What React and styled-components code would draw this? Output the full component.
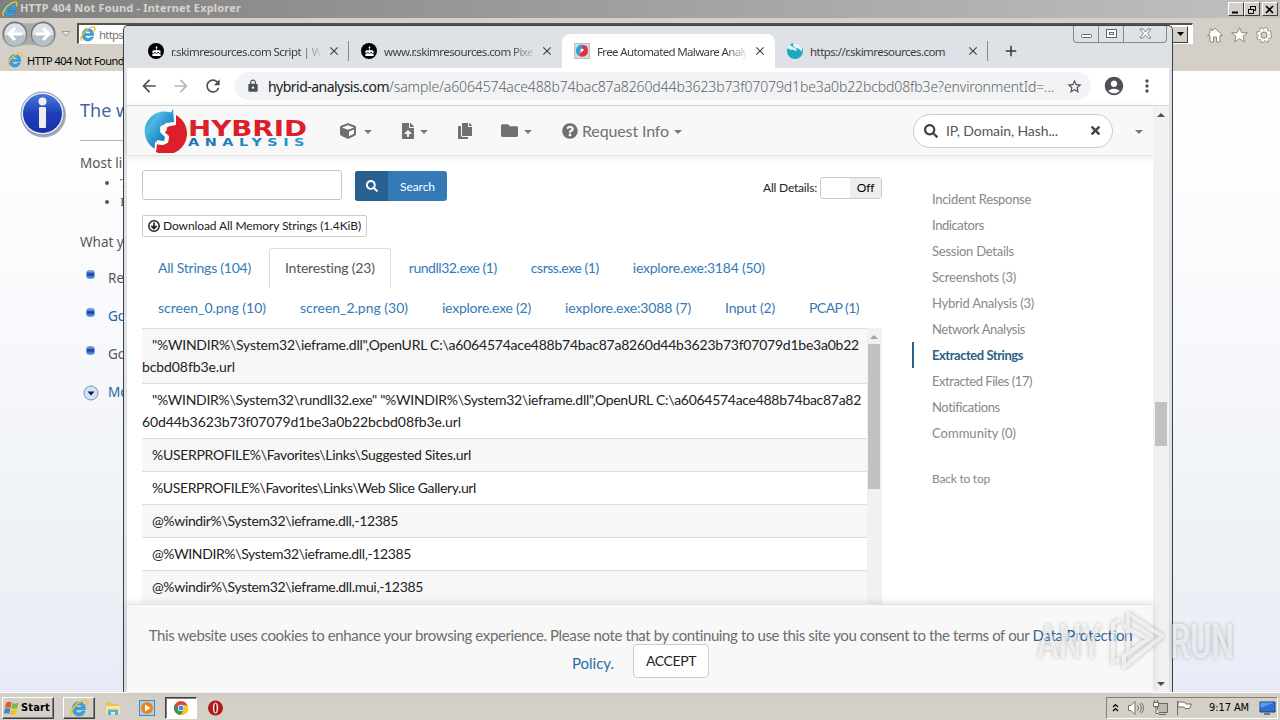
import React, { useLayoutEffect, useRef, useState } from "react";
import styled, { createGlobalStyle, css } from "styled-components";
import {
  FaCube,
  FaFileUpload,
  FaCopy,
  FaFolder,
  FaQuestionCircle,
  FaSearch,
  FaTimes,
} from "react-icons/fa";
import {
  MdArrowBack,
  MdArrowForward,
  MdRefresh,
  MdLock,
  MdStarBorder,
  MdAccountCircle,
  MdMoreVert,
  MdAdd,
  MdClose,
  MdCake,
} from "react-icons/md";

// keeps a label at a fixed width by adjusting its letter spacing
const Fit = ({ w, children }) => {
  const ref = useRef(null);
  const [space, setSpace] = useState(0);

  useLayoutEffect(() => {
    const natural = ref.current.getBoundingClientRect().width;
    setSpace((w - natural) / ref.current.textContent.length);
  }, []);

  return (
    <StFit ref={ref} style={{ letterSpacing: space }}>
      {children}
    </StFit>
  );
};

const IeLogo = ({ size = 16 }) => (
  <svg width={size} height={size} viewBox="0 0 16 16">
    <path
      d="M13.6 9.6H5.1c.2 1.8 1.4 2.8 3 2.8 1.100 0 2-.5 2.500-1.300h2.800C12.600 13.500 10.700 15 8 15c-3.600 0-5.900-2.500-5.900-6.100C2.100 5.300 4.500 2.600 8 2.600c3.500 0 5.900 2.600 5.600 7zM5.200 7.500h5.400C10.400 6 9.400 5.100 7.900 5.100 6.400 5.100 5.500 6 5.200 7.500z"
      fill="#35a5e5"
      stroke="#1c78c0"
      strokeWidth=".5"
    />
    <path
      d="M1.700 14.600C-.6 12.500 3.600 5.500 8.300 2.800 11.500.9 14.800.3 15 2.600c.1.900-.3 1.900-.8 2.900"
      fill="none"
      stroke="#f2c22c"
      strokeWidth="1.500"
    />
  </svg>
);

const HybridLogo = () => (
  <svg width="164" height="44" viewBox="0 0 164 44">
    <defs>
      <linearGradient id="blue" x1="0" y1="0" x2="1" y2="1">
        <stop offset="0" stopColor="#1682be" />
        <stop offset=".3" stopColor="#4db9e4" />
        <stop offset=".7" stopColor="#137fbd" />
      </linearGradient>
      <linearGradient id="word" x1="0" y1="0" x2="1" y2="0">
        <stop offset="0" stopColor="#1d6fae" />
        <stop offset="1" stopColor="#1fa0cf" />
      </linearGradient>
    </defs>
    <path
      d="M29 0l1 13-8 1-5 4-1 5 5 5-1 4-7-1-2 9A20 20 0 0 1 20 2.500q4 0 7 1z"
      fill="url(#blue)"
    />
    <path
      d="M32 6a20 20 0 0 1-20 37v-8l7 1 5-3 1-6-5-4 1-4 5-2 6-1z"
      fill="#dd1f2c"
    />
    <path d="M31 5v10l-7 1-4 4 0 4 4 4-1 5-4 2-7-1-.5 7" fill="none" stroke="#f8f8f8" strokeWidth="2" />
    <circle cx="19.500" cy="19.500" r="3.500" fill="#f8f8f8" />
    <text
      x="44"
      y="27"
      textLength="119"
      lengthAdjust="spacingAndGlyphs"
      fontFamily="DejaVu Sans"
      fontWeight="700"
      fontSize="21.500"
      fill="#dd1f2c"
    >
      HYBRID
    </text>
    <text
      x="44"
      y="37"
      textLength="122"
      lengthAdjust="spacingAndGlyphs"
      letterSpacing="4"
      fontFamily="DejaVu Sans"
      fontWeight="700"
      fontSize="10.500"
      fill="url(#word)"
    >
      ANALYSIS
    </text>
  </svg>
);

const tabs = [
  { title: "r.skimresources.com Script | W", icon: "cake", w: 151 },
  { title: "www.r.skimresources.com Pixe", icon: "cake", w: 149 },
  { title: "Free Automated Malware Analy", icon: "hybrid", w: 151, active: true },
  { title: "https://r.skimresources.com", icon: "skim", w: 135 },
];

const stringTabs = [
  [
    { label: "All Strings (104)", w: 93 },
    { label: "Interesting (23)", w: 90, active: true },
    { label: "rundll32.exe (1)", w: 88 },
    { label: "csrss.exe (1)", w: 68 },
    { label: "iexplore.exe:3184 (50)", w: 132 },
  ],
  [
    { label: "screen_0.png (10)", w: 108 },
    { label: "screen_2.png (30)", w: 108 },
    { label: "iexplore.exe (2)", w: 89 },
    { label: "iexplore.exe:3088 (7)", w: 126 },
    { label: "Input (2)", w: 50 },
    { label: "PCAP (1)", w: 50 },
  ],
];

const rows = [
  [
    ['"%WINDIR%\\System32\\ieframe.dll",OpenURL C:\\a6064574ace488b74bac87a8260d44b3623b73f07079d1be3a0b22', 707],
    ["bcbd08fb3e.url", 93],
  ],
  [
    ['"%WINDIR%\\System32\\rundll32.exe" "%WINDIR%\\System32\\ieframe.dll",OpenURL C:\\a6064574ace488b74bac87a82', 709],
    ["60d44b3623b73f07079d1be3a0b22bcbd08fb3e.url", 319],
  ],
  [["%USERPROFILE%\\Favorites\\Links\\Suggested Sites.url", 319]],
  [["%USERPROFILE%\\Favorites\\Links\\Web Slice Gallery.url", 324]],
  [["@%windir%\\System32\\ieframe.dll,-12385", 246]],
  [["@%WINDIR%\\System32\\ieframe.dll,-12385", 259]],
  [["@%windir%\\System32\\ieframe.dll.mui,-12385", 271]],
];

const sections = [
  ["Incident Response", 99],
  ["Indicators", 52],
  ["Session Details", 82],
  ["Screenshots (3)", 84],
  ["Hybrid Analysis (3)", 102],
  ["Network Analysis", 93],
  ["Extracted Strings", 91],
  ["Extracted Files (17)", 100],
  ["Notifications", 68],
  ["Community (0)", 84],
];

const TabIcon = ({ type }) => {
  if (type === "cake") {
    return (
      <StCake>
        <MdCake />
      </StCake>
    );
  }
  if (type === "hybrid") {
    return (
      <svg width="16" height="16" viewBox="0 0 16 16">
        <rect x=".5" y=".5" width="15" height="15" fill="#d3dadd" stroke="#b9bfc3" />
        <path d="M9 2C5 1 2 4 2 8c0 2 1 4 3 5l1-4 2-2z" fill="#2ba3d8" />
        <path d="M9 2c4 0 5 3 5 6 0 4-4 7-9 5l1-3 2-1-1-2z" fill="#e0303c" />
        <circle cx="8" cy="7" r="1.500" fill="#fff" />
      </svg>
    );
  }
  return (
    <svg width="16" height="16" viewBox="0 0 16 16">
      <circle cx="8" cy="8" r="8" fill="#1ba9bf" />
      <path
        d="M7 0C5 2 6 4 9 5c4 1 5 2 5 4 3-4 0-9-7-9zM0 4c2 4 6 2 9 4 2-1 0-3-3-4C4 3 3 2 3 1z"
        fill="#e5f2f6"
      />
    </svg>
  );
};

const InternetExplorer = () => (
  <StIe>
    <StIeTitle>
      <IeLogo />
      <Fit w={221}>HTTP 404 Not Found - Internet Explorer</Fit>
      <StWinButtons>
        <StWinButton>
          <svg width="10" height="9">
            <path d="M1 7.500h6" stroke="#000" strokeWidth="2" />
          </svg>
        </StWinButton>
        <StWinButton>
          <svg width="10" height="9" fill="none" stroke="#000">
            <path d="M3.500 4V1.500h5v4H7M3 1.500h6M1.500 4.500h5v4h-5zM1 4.500h6" />
          </svg>
        </StWinButton>
        <StWinButton $gap>
          <svg width="10" height="9">
            <path d="M1 1l7 7M8 1L1 8" stroke="#000" strokeWidth="1.600" />
          </svg>
        </StWinButton>
      </StWinButtons>
    </StIeTitle>
    <StIeBar>
      <StIeNav>
        <svg width="56" height="28" viewBox="0 0 56 28">
          <path d="M14 1q14 5 28 0a13 13 0 0 1 0 26q-14-5-28 0a13 13 0 0 1 0-26z" fill="#aaa9a6" />
          <g fill="#dce3e8" stroke="#737679" strokeWidth="1.500">
            <circle cx="14" cy="14" r="11.500" />
            <circle cx="42" cy="14" r="11.500" />
          </g>
          <path d="M3 15a11 11 0 0 0 22 0zM31 15a11 11 0 0 0 22 0z" fill="#b6c0c8" />
          <g fill="none" stroke="#fff" strokeWidth="3">
            <path d="M21 14H8M14 8l-6 6 6 6M35 14h13M42 8l6 6-6 6" />
          </g>
        </svg>
        <svg width="10" height="6">
          <path d="M1 .5h8l-4 4.500z" fill="#e7e5e0" stroke="#9e9b95" />
        </svg>
      </StIeNav>
      <StAddress>
        <IeLogo />
        <Fit w={24}>https</Fit>
        <StDrop>
          <svg width="7" height="4">
            <path d="M0 0h7L3.500 4z" />
          </svg>
        </StDrop>
      </StAddress>
      <StIeTools>
        <svg width="16" height="16" viewBox="0 0 16 16">
          <path
            d="M8 1l7.500 7.500H13V15H9.500v-5h-3v5H3V8.500H.5L3 6V2h2v2z"
            fill="#fff"
            stroke="#8c8982"
          />
        </svg>
        <svg width="17" height="16" viewBox="0 0 17 16">
          <path
            d="M8.500.7l2.300 5h5.500L12 9.300l1.600 5.700-5.100-3.300L3.400 15 5 9.300.7 5.700h5.500z"
            fill="#fff"
            stroke="#8c8982"
          />
        </svg>
        <svg width="16" height="16" viewBox="0 0 16 16">
          <circle cx="8" cy="8" r="6.500" fill="none" stroke="#8c8982" strokeWidth="3" strokeDasharray="3.100 2" />
          <circle cx="8" cy="8" r="4.500" fill="none" stroke="#8c8982" strokeWidth="4" />
          <circle cx="8" cy="8" r="6" fill="none" stroke="#fff" strokeWidth="2" strokeDasharray="2.700 2" />
          <circle cx="8" cy="8" r="4.500" fill="none" stroke="#fff" strokeWidth="2" />
        </svg>
      </StIeTools>
    </StIeBar>
    <StIeTabs>
      <IeLogo />
      <Fit w={97}>HTTP 404 Not Found</Fit>
    </StIeTabs>
    <StIePage>
      <svg width="46" height="47" viewBox="0 0 46 47">
        <defs>
          <linearGradient id="info" x1="0" y1="0" x2="0" y2="1">
            <stop offset="0" stopColor="#4a7ad8" />
            <stop offset=".5" stopColor="#1d3fb8" />
            <stop offset="1" stopColor="#1c2fae" />
          </linearGradient>
        </defs>
        <circle cx="23.500" cy="24" r="22.500" fill="#a5a9b5" />
        <circle cx="22.500" cy="22.500" r="21.500" fill="#e4ebf4" stroke="#8793ac" />
        <circle cx="22.500" cy="22.500" r="19.500" fill="url(#info)" />
        <circle cx="22.500" cy="10.500" r="4" fill="#f2f2f5" />
        <rect x="19" y="16" width="7" height="21" rx="1" fill="#eeeef2" />
      </svg>
      <StIeText>
        <h1>The w</h1>
        <StRule />
        <StIeLine $h={32} $top={12}>
          Most li
        </StIeLine>
        <StIeDots>
          <li>T</li>
          <li>I</li>
        </StIeDots>
        <StIeLine $h={57} $top={21}>
          What y
        </StIeLine>
        <StTry>
          <StBullet />
          Re
        </StTry>
        <StTry $link>
          <StBullet />
          Go
        </StTry>
        <StTry>
          <StBullet />
          Go
        </StTry>
        <StTry $link $more>
          <svg width="16" height="16" viewBox="0 0 16 16">
            <circle cx="8" cy="8" r="7" fill="#d3e4f4" stroke="#7994b0" />
            <path d="M4.500 6.500h7L8 10.500z" fill="#0a1c50" />
          </svg>
          Mo
        </StTry>
      </StIeText>
    </StIePage>
  </StIe>
);

const Chrome = () => (
  <StChrome>
    <StTabStrip>
      {tabs.map((tab, i) => (
        <StTab key={i} $active={tab.active} $line={i === 0 || i === 3}>
          <TabIcon type={tab.icon} />
          <StTabTitle $fade={i < 3}>
            <Fit w={tab.w}>{tab.title}</Fit>
          </StTabTitle>
          <MdClose size={14} />
        </StTab>
      ))}
      <StNewTab>
        <MdAdd size={18} />
      </StNewTab>
      <StCaption>
        <span>
          <svg width="13" height="12">
            <rect x="1.500" y="6.500" width="10" height="3" rx="1" fill="#fff" stroke="#666" />
          </svg>
        </span>
        <span>
          <svg width="13" height="12" fill="#fff" stroke="#666">
            <rect x="1.500" y="1.500" width="10" height="8" />
            <rect x="4.500" y="4.500" width="4" height="2" />
          </svg>
        </span>
        <span>
          <svg width="13" height="12" fill="#fff" stroke="#777" strokeWidth=".9">
            <path d="M1 1h3l2.500 3L9 1h3L8.500 5.500 12 10H9L6.500 7 4 10H1l3.500-4.500z" />
          </svg>
        </span>
      </StCaption>
    </StTabStrip>
    <StToolbar>
      <MdArrowBack size={20} />
      <MdArrowForward size={20} color="#b5b7ba" />
      <MdRefresh size={20} />
      <StOmnibox>
        <MdLock size={14} />
        <StUrl>
          <b>
            <Fit w={121}>hybrid-analysis.com</Fit>
          </b>
          <Fit w={665}>
            /sample/a6064574ace488b74bac87a8260d44b3623b73f07079d1be3a0b22bcbd08fb3e?environmentId=...
          </Fit>
        </StUrl>
        <MdStarBorder size={17} />
      </StOmnibox>
      <MdAccountCircle size={22} />
      <MdMoreVert size={20} />
    </StToolbar>
    <StViewport>
      <StPage>
        <StHeader>
          <HybridLogo />
          <StNavItem $left={32}>
            <FaCube size={16} />
            <StCaret $left={8} />
          </StNavItem>
          <StNavItem $left={28}>
            <FaFileUpload size={16} />
            <StCaret $left={4} />
          </StNavItem>
          <StNavItem $left={29}>
            <FaCopy size={16} />
          </StNavItem>
          <StNavItem $left={28}>
            <FaFolder size={17} />
            <StCaret $left={6} />
          </StNavItem>
          <StNavItem $left={30}>
            <FaQuestionCircle size={16} />
            <StNavText>
              <Fit w={87}>Request Info</Fit>
            </StNavText>
            <StCaret $left={5} />
          </StNavItem>
          <StPill>
            <FaSearch size={14} />
            <Fit w={112}>IP, Domain, Hash...</Fit>
            <FaTimes size={13} />
          </StPill>
          <StCaret $left={22} />
        </StHeader>
        <StContent>
          <StMain>
            <StSearchRow>
              <StInput />
              <StSearch>
                <i>
                  <FaSearch size={12} />
                </i>
                <p>
                  <Fit w={35}>Search</Fit>
                </p>
              </StSearch>
              <StDetails>
                <Fit w={54}>All Details:</Fit>
                <StToggle>
                  <p>
                    <Fit w={17}>Off</Fit>
                  </p>
                </StToggle>
              </StDetails>
            </StSearchRow>
            <StDownload>
              <svg width="12" height="12" viewBox="0 0 12 12" fill="none" stroke="#222">
                <circle cx="6" cy="6" r="5.200" strokeWidth="1.500" />
                <path d="M6 2.500v6M3.300 5.800L6 8.500l2.700-2.700" strokeWidth="1.700" />
              </svg>
              <Fit w={198}>Download All Memory Strings (1.4KiB)</Fit>
            </StDownload>
            {stringTabs.map((line, i) => (
              <StPillRow key={i}>
                {line.map((tab) => (
                  <StStringTab key={tab.label} $active={tab.active}>
                    <Fit w={tab.w}>{tab.label}</Fit>
                  </StStringTab>
                ))}
              </StPillRow>
            ))}
            <StListBox>
              <StList>
                {rows.map((lines, i) => (
                  <StString key={i}>
                    {lines.map(([text, w]) => (
                      <div key={text}>
                        <Fit w={w}>{text}</Fit>
                      </div>
                    ))}
                  </StString>
                ))}
              </StList>
              <StListScroll>
                <StTriangle $color="#a3a3a3" />
                <StThumb $h={145} $top={5} />
              </StListScroll>
            </StListBox>
          </StMain>
          <StSide>
            {sections.map(([label, w]) => (
              <StSideItem key={label} $active={label === "Extracted Strings"}>
                <Fit w={w}>{label}</Fit>
              </StSideItem>
            ))}
            <StBackToTop>
              <Fit w={58}>Back to top</Fit>
            </StBackToTop>
          </StSide>
        </StContent>
        <StCookie>
          <div>
            <Fit w={884}>
              This website uses cookies to enhance your browsing experience. Please note that by
              continuing to use this site you consent to the terms of our{" "}
            </Fit>
            <a>
              <Fit w={100}>Data Protection</Fit>
            </a>
          </div>
          <StCookieRow>
            <a>
              <Fit w={42}>Policy.</Fit>
            </a>
            <StAccept>
              <Fit w={50}>ACCEPT</Fit>
            </StAccept>
          </StCookieRow>
        </StCookie>
      </StPage>
      <StScroll>
        <StTriangle />
        <StThumb $h={44} $top={285} />
        <StTriangle $down />
      </StScroll>
    </StViewport>
  </StChrome>
);

const Watermark = () => (
  <StWatermark>
    <svg width="206" height="72" viewBox="0 0 206 72">
      <g fontFamily="Roboto, sans-serif" fontSize="49" fontWeight="500" fill="#fff" fillOpacity=".6">
        <text x="3" y="52" textLength="64" lengthAdjust="spacingAndGlyphs">
          ANY
        </text>
        <text x="136" y="52" textLength="64" lengthAdjust="spacingAndGlyphs">
          RUN
        </text>
      </g>
      <path
        d="M94 49V8l34 22-38 31V50l24-17-24-13M86 14l-7 4v38l6-3"
        fill="none"
        stroke="#fff"
        strokeOpacity=".65"
        strokeWidth="4"
        strokeLinejoin="round"
      />
    </svg>
  </StWatermark>
);

const Taskbar = () => (
  <StTaskbar>
    <StStart>
      <svg width="15" height="16" viewBox="0 0 15 16">
        <path d="M2 3q3-2 5.500-.5L6.500 8Q4 6.500 1 8z" fill="#e2572b" />
        <path d="M8.300 3q3 1.500 6.200-.5L13.300 8q-3 1.500-6 .3z" fill="#79b93c" />
        <path d="M.8 8.800q3-1.500 5.500 0L5.200 14Q3 12.500 0 14z" fill="#3b87d0" />
        <path d="M7 9.200q3 1.200 6.200-.4L12 14.300q-3 1.500-6 .2z" fill="#f4bd2c" />
      </svg>
      <Fit w={29}>Start</Fit>
    </StStart>
    <StTask $raised>
      <IeLogo size={18} />
    </StTask>
    <StTask>
      <svg width="16" height="16" viewBox="0 0 16 16">
        <path d="M1 2h5l1 2h7v10H1z" fill="#e7c55d" />
        <path d="M1 6h14v8H1z" fill="#f8e59a" />
        <path d="M3 15V9.500h10V15h-3v-3H6v3z" fill="#54b3dd" />
      </svg>
    </StTask>
    <StTask>
      <svg width="16" height="16" viewBox="0 0 16 16">
        <rect x=".5" y=".5" width="15" height="15" fill="#a8d0ee" stroke="#4c87b8" />
        <circle cx="8" cy="8" r="6" fill="#f08318" />
        <path d="M6 4.500v7L11.500 8z" fill="#fff" />
      </svg>
    </StTask>
    <StTask $pressed>
      <svg width="14" height="14" viewBox="0 0 14 14">
        <circle cx="7" cy="7" r="7" fill="#dc4437" />
        <path d="M1 3.500A7 7 0 0 0 6.500 14L10 8.500 7 10 4 8.700z" fill="#2b9c54" />
        <path d="M13.400 4.200A7 7 0 0 1 6.500 14L10 8.500V5L7 4.200z" fill="#f8c920" />
        <circle cx="7" cy="7" r="3.200" fill="#fff" />
        <circle cx="7" cy="7" r="2.500" fill="#4585ee" />
      </svg>
    </StTask>
    <StTask>
      <svg width="15" height="16" viewBox="0 0 15 16">
        <circle cx="7.500" cy="8" r="7.500" fill="#b41717" />
        <ellipse cx="7.500" cy="8" rx="2.700" ry="5.500" fill="#f7eeee" />
        <ellipse cx="7.500" cy="8" rx="1.100" ry="4.500" fill="#8c0d0d" />
      </svg>
    </StTask>
    <StTray>
      <svg width="7" height="9" fill="none" stroke="#000" strokeWidth="1.200">
        <path d="M1 4l2.500-2.500L6 4M1 8l2.500-2.500L6 8" />
      </svg>
      <svg width="17" height="16" viewBox="0 0 17 16" fill="none" stroke="#77736d">
        <path d="M1.500 5.500H4l4-4v13l-4-4H1.500z" fill="#fff" />
        <path d="M10.500 5.500q2 2.500 0 5M12.500 3.500q3.500 4.500 0 9M14.500 2.500q4 5.500 0 11" />
      </svg>
      <svg width="16" height="16" viewBox="0 0 16 16" fill="#fff" stroke="#68645e">
        <path d="M5.500 3.500h10v9h-10z" fill="#bbb9b4" />
        <path d="M7 14.500h7M1.500 2.500h5v4h-5zM4 6.500v7h3M2.500 0v3M5.500 0v3" />
      </svg>
      <svg width="17" height="16" viewBox="0 0 17 16" fill="#fff" stroke="#716d67">
        <path d="M1.500 1v14.500M2 2h5q2 0 3 2h5.500l-2 4.500H9L8 7H2z" />
      </svg>
      <StClock>
        <Fit w={40}>9:17 AM</Fit>
      </StClock>
      <svg width="17" height="14" viewBox="0 0 17 14">
        <path d="M1 1h15v10H1z" fill="#2d70d3" stroke="#1b407c" />
        <path d="M1.500 7L15 1.500H1.500z" fill="#639ce9" />
        <path d="M5 13h6" stroke="#4d5c70" strokeWidth="1.500" />
      </svg>
    </StTray>
  </StTaskbar>
);

const App = () => {
  return (
    <>
      <GlobalStyle />
      <StDesktop>
        <InternetExplorer />
        <Chrome />
        <Taskbar />
        <Watermark />
      </StDesktop>
    </>
  );
};

export default App;

const GlobalStyle = createGlobalStyle`
  * {
    box-sizing: border-box;
  }
  body {
    margin: 0;
    overflow: hidden;
  }
  p {
    margin: 0;
  }
  svg {
    flex-shrink: 0;
    display: block;
  }
`;

const StFit = styled.span`
  display: inline-block;
  white-space: pre;
`;

const StDesktop = styled.div`
  position: relative;
  width: 1280px;
  height: 720px;
  display: flex;
  flex-direction: column;
  overflow: hidden;
  font-family: "Noto Sans", sans-serif;
`;

/* ---- internet explorer ---- */

const StIe = styled.div`
  height: 692px;
  display: flex;
  flex-direction: column;
  background: #d4d0c8;
`;

const StIeTitle = styled.div`
  height: 18px;
  display: flex;
  align-items: center;
  gap: 2px;
  padding: 0 2px;
  background: linear-gradient(to right, #808080, #c0c0c0);
  color: #d8d4cc;
  font-size: 11px;
  line-height: 16px;
  font-weight: 700;

  > span {
    padding-bottom: 2px;
  }
`;

const StWinButtons = styled.div`
  display: flex;
  margin-left: auto;
`;

const StWinButton = styled.div`
  width: 16px;
  height: 14px;
  margin-left: ${(props) => (props.$gap ? "2px" : 0)};
  display: flex;
  align-items: center;
  justify-content: center;
  background: #d4d0c8;
  border: 1px solid;
  border-color: #fff #404040 #404040 #fff;
`;

const StIeBar = styled.div`
  height: 31px;
  display: flex;
  align-items: center;
  padding-top: 0;
`;

const StIeNav = styled.div`
  width: 77px;
  display: flex;
  align-items: center;
  gap: 4px;
  padding-left: 1px;
`;

const StAddress = styled.div`
  width: 1116px;
  height: 21px;
  display: flex;
  align-items: center;
  gap: 3px;
  padding-left: 1px;
  background: #fff;
  border: 1px solid;
  border-width: 2px 1px 1px 2px;
  border-color: #55534f #fff #fff #55534f;
  color: #777;
  font-size: 11.5px;
`;

const StDrop = styled.div`
  width: 16px;
  height: 17px;
  margin-left: auto;
  margin-right: 4px;
  display: flex;
  align-items: center;
  justify-content: center;
  background: #d4d0c8;
  border: 1px solid;
  border-color: #fff #404040 #404040 #fff;
`;

const StIeTools = styled.div`
  display: flex;
  gap: 8px;
  margin-left: 14px;
  padding-top: 3px;
`;

const StIeTabs = styled.div`
  height: 22px;
  display: flex;
  align-items: center;
  gap: 4px;
  padding-left: 7px;
  font-size: 11px;
  color: #000;
`;

const StIePage = styled.div`
  flex: 1;
  display: flex;
  gap: 14px;
  padding: 20px 0 0 20px;
  background: linear-gradient(to bottom, #fff 0, #fcfcfe 25%, #f4f6fa 54%, #ecf1f5 80%, #e9ecf8 100%);
  color: #575757;
  font-size: 13.5px;

  h1 {
    margin: 0;
    padding-top: 5px;
    height: 49px;
    color: #4465a2;
    font-size: 18px;
    font-weight: 400;
    line-height: 29px;
  }
`;

const StIeText = styled.div`
  width: 60px;
  white-space: nowrap;
`;

const StRule = styled.div`
  height: 1px;
  background: #b5b5b9;
`;

const StIeLine = styled.div`
  height: ${(props) => props.$h}px;
  padding-top: ${(props) => props.$top}px;
  line-height: 20px;
`;

const StIeDots = styled.ul`
  margin: 0;
  padding: 0 0 0 40px;
  height: 38px;
  font-family: "Liberation Serif", serif;
  line-height: 19px;
`;

const StTry = styled.div`
  height: 38px;
  display: flex;
  align-items: flex-start;
  gap: ${(props) => (props.$more ? "9px" : "13px")};
  padding-left: ${(props) => (props.$more ? "3px" : "6px")};
  line-height: 20px;
  color: ${(props) => (props.$link ? "#24669d" : "#575757")};

  svg {
    margin-top: 3px;
  }
`;

const StBullet = styled.div`
  width: 9px;
  height: 9px;
  margin-top: 2px;
  border-radius: 3px;
  border: 1px solid #7da0d8;
  background: linear-gradient(#91aede, #123aa5 45%, #4e9be8);
`;

/* ---- chrome ---- */

const StChrome = styled.div`
  position: absolute;
  left: 123px;
  top: 25px;
  width: 1050px;
  height: 667px;
  z-index: 1;
  display: flex;
  flex-direction: column;
  padding: 0 3px;
  background: #dee1e6;
  border: 1px solid #3c4045;
  border-bottom: none;
  border-radius: 5px 5px 0 0;
`;

const StTabStrip = styled.div`
  height: 42px;
  display: flex;
  align-items: flex-end;
  padding-left: 9px;
`;

const StTab = styled.div`
  position: relative;
  width: 213px;
  height: 34px;
  display: flex;
  align-items: center;
  gap: 7px;
  padding-left: 12px;
  color: #3c4043;
  font-size: 11.5px;
  border-radius: 8px 8px 0 0;
  ${(props) =>
    props.$active &&
    css`
      background: #fff;
    `}

  ${(props) =>
    props.$line &&
    css`
      &::after {
        content: "";
        position: absolute;
        right: 0;
        top: 7px;
        width: 1px;
        height: 20px;
        background: #85888c;
      }
    `}
`;

const StTabTitle = styled.div`
  width: 149px;
  white-space: nowrap;
  ${(props) =>
    props.$fade &&
    css`
      mask-image: linear-gradient(to right, #000 128px, rgba(0, 0, 0, 0.15) 149px);
    `}
`;

const StCake = styled.div`
  width: 16px;
  height: 16px;
  display: flex;
  align-items: center;
  justify-content: center;
  border-radius: 50%;
  background: #000;
  color: #fff;
  font-size: 11px;
`;

const StNewTab = styled.div`
  height: 34px;
  display: flex;
  align-items: center;
  padding-left: 14px;
  color: #33363a;
`;

const StCaption = styled.div`
  align-self: flex-start;
  display: flex;
  margin-left: auto;
  margin-right: 2px;
  border: 1px solid #85898f;
  border-top: none;
  border-radius: 0 0 4px 4px;

  span {
    width: 25px;
    height: 16px;
    display: flex;
    align-items: center;
    justify-content: center;
    border-right: 1px solid #85898f;
  }
  span:last-child {
    width: 42px;
    border-right: none;
  }
`;

const StToolbar = styled.div`
  height: 38px;
  display: flex;
  align-items: center;
  padding: 0 12px 1px;
  gap: 12px;
  background: #fff;
  border-bottom: 1px solid #d8dadd;
  color: #4d5156;
`;

const StOmnibox = styled.div`
  width: 861px;
  height: 28px;
  display: flex;
  align-items: center;
  padding-left: 11px;
  gap: 8px;
  border-radius: 14px;
  background: #f1f3f4;
`;

const StUrl = styled.div`
  width: 790px;
  display: flex;
  color: #5f6368;
  font-size: 14px;
  font-weight: 300;

  b {
    color: #202124;
    font-weight: 400;
  }
`;

const StViewport = styled.div`
  flex: 1;
  min-height: 0;
  display: flex;
`;

const StPage = styled.div`
  width: 1026px;
  display: flex;
  flex-direction: column;
  background: #fff;
  font-family: Lato, sans-serif;
  font-size: 14px;
  color: #222;
`;

const StHeader = styled.div`
  height: 50px;
  flex-shrink: 0;
  display: flex;
  align-items: center;
  padding-left: 17px;
  background: #f8f8f8;
  border-bottom: 1px solid #e3e3e3;
  box-shadow: 0 1px 8px rgba(0, 0, 0, 0.1);
  color: #707070;
`;

const StNavItem = styled.div`
  display: flex;
  align-items: center;
  margin-left: ${(props) => props.$left}px;
`;

const StNavText = styled.div`
  margin-left: 4px;
  font-size: 16px;
`;

const StCaret = styled.div`
  width: 8px;
  height: 4px;
  margin-top: 2px;
  margin-left: ${(props) => props.$left}px;
  border: 4px solid transparent;
  border-top-color: #777;
  border-bottom: none;
`;

const StPill = styled.div`
  width: 200px;
  height: 34px;
  margin-left: auto;
  display: flex;
  align-items: center;
  gap: 8px;
  padding: 0 10px;
  background: #fff;
  border: 1px solid #ccc;
  border-radius: 17px;
  color: #555;

  svg {
    color: #444;
  }
  svg:last-child {
    margin-left: auto;
  }
  & + div {
    margin-right: 10px;
  }
`;

const StContent = styled.div`
  flex: 1;
  min-height: 0;
  display: flex;
  padding-left: 15px;
`;

const StMain = styled.div`
  width: 740px;
  display: flex;
  flex-direction: column;
  padding-top: 14px;
`;

const StSearchRow = styled.div`
  height: 31px;
  display: flex;
`;

const StInput = styled.div`
  width: 200px;
  height: 30px;
  border: 1px solid #c6c6c6;
  border-radius: 3px;
`;

const StSearch = styled.div`
  width: 92px;
  height: 30px;
  margin: 1px 0 0 13px;
  display: flex;
  border-radius: 3px;
  overflow: hidden;
  background: #337ab7;
  color: #fff;
  font-size: 12px;

  i {
    width: 33px;
    display: flex;
    align-items: center;
    justify-content: center;
    background: #286090;
  }
  p {
    flex: 1;
    display: flex;
    align-items: center;
    justify-content: center;
  }
`;

const StDetails = styled.div`
  margin-left: auto;
  display: flex;
  align-items: center;
  gap: 3px;
  padding-top: 4px;
  font-size: 12px;
`;

const StToggle = styled.div`
  width: 62px;
  height: 22px;
  display: flex;
  justify-content: flex-end;
  border: 1px solid #ccc;
  border-radius: 3px;

  p {
    width: 31px;
    display: flex;
    align-items: center;
    justify-content: center;
    background: #eee;
    color: #000;
  }
`;

const StDownload = styled.div`
  width: 225px;
  height: 22px;
  margin: 14px 0 11px;
  display: flex;
  align-items: center;
  gap: 3px;
  padding: 0 0 1px 5px;
  border: 1px solid #ccc;
  border-radius: 2px;
  font-size: 12px;
`;

const StPillRow = styled.div`
  height: 40px;
  flex-shrink: 0;
  display: flex;
  gap: 2px;
`;

const StStringTab = styled.div`
  height: 40px;
  display: flex;
  align-items: center;
  padding: 0 15px 2px;
  border: 1px solid transparent;
  border-bottom: none;
  color: #337ab7;
  ${(props) =>
    props.$active &&
    css`
      border-color: #ddd;
      border-radius: 3px 3px 0 0;
      color: #555;
    `}
`;

const StListBox = styled.div`
  flex: 1;
  min-height: 0;
  display: flex;
  overflow: hidden;
`;

const StList = styled.div`
  width: 725px;
`;

const StString = styled.div`
  padding: 5px 0;
  border-top: 1px solid #ddd;
  line-height: 22px;
  white-space: nowrap;

  &:nth-child(odd) {
    background: #f7f7f7;
  }
  > div:first-child {
    padding-left: 10px;
  }
`;

const StListScroll = styled.div`
  width: 15px;
  padding: 7px 2px 0 1px;
  background: #f1f1f1;
`;

const StTriangle = styled.div`
  width: 8px;
  height: 4px;
  margin: ${(props) => (props.$down ? "auto auto 6px" : "0 auto")};
  border: 4px solid transparent;
  ${(props) =>
    props.$down
      ? css`
          border-top-color: #505050;
          border-bottom: none;
        `
      : css`
          border-bottom-color: ${props.$color || "#505050"};
          border-top: none;
        `}
`;

const StThumb = styled.div`
  width: 12px;
  height: ${(props) => props.$h}px;
  margin-top: ${(props) => props.$top}px;
  background: #c1c1c1;
`;

const StSide = styled.div`
  margin-left: 30px;
  padding-top: 30px;
  color: #888;
  font-size: 13px;
`;

const StSideItem = styled.div`
  height: 26px;
  display: flex;
  align-items: center;
  padding-left: 18px;
  border-left: 2px solid transparent;
  ${(props) =>
    props.$active &&
    css`
      border-color: #2a6085;
      color: #2a6085;
      font-weight: 700;
    `}
`;

const StBackToTop = styled.div`
  margin: 25px 0 0 20px;
  font-size: 12px;
`;

const StCookie = styled.div`
  height: 88px;
  flex-shrink: 0;
  padding: 16px 0 0 1px;
  text-align: center;
  background: #f8f8f8;
  border-top: 1px solid #e2e2e2;
  box-shadow: 0 -1px 8px rgba(0, 0, 0, 0.12);
  color: #6d6d6d;
  font-size: 15px;
  line-height: 28px;
  z-index: 1;

  a {
    color: #2a6ca5;
  }
`;

const StCookieRow = styled.div`
  display: flex;
  justify-content: center;
  gap: 19px;
`;

const StAccept = styled.div`
  width: 76px;
  height: 34px;
  margin-top: -5px;
  border: 1px solid #ccc;
  border-radius: 4px;
  background: #fff;
  color: #222;
  font-size: 14px;
  line-height: 32px;
`;

const StScroll = styled.div`
  width: 16px;
  display: flex;
  flex-direction: column;
  align-items: center;
  padding-top: 7px;
  background: #f1f1f1;
`;

const StWatermark = styled.div`
  position: absolute;
  left: 1034px;
  top: 606px;
  z-index: 2;
  filter: drop-shadow(0 0 2px rgba(0, 0, 0, 0.4));
`;

/* ---- taskbar ---- */

const StTaskbar = styled.div`
  height: 28px;
  display: flex;
  align-items: center;
  padding: 2px 2px 0;
  background: #d4d0c8;
  border-top: 1px solid #fff;
  font-family: "DejaVu Sans Condensed", "DejaVu Sans", sans-serif;
  font-size: 11px;
  color: #000;
`;

const StStart = styled.div`
  width: 52px;
  height: 22px;
  margin-right: 9px;
  display: flex;
  align-items: center;
  gap: 2px;
  padding-left: 1px;
  border: 1px solid;
  border-color: #fff #404040 #404040 #fff;
  box-shadow: inset -1px -1px #808080;
  font-weight: 700;
`;

const StTask = styled.div`
  width: 32px;
  height: 22px;
  margin-right: 2px;
  display: flex;
  align-items: center;
  justify-content: center;
  border: 1px solid transparent;
  ${(props) =>
    props.$raised &&
    css`
      border-color: #fff #404040 #404040 #fff;
      box-shadow: inset -1px -1px #808080;
    `}
  ${(props) =>
    props.$pressed &&
    css`
      background: #fff;
      border-color: #404040 #fff #fff #404040;
      box-shadow: inset 1px 1px #808080;
    `}
`;

const StTray = styled.div`
  width: 172px;
  height: 22px;
  margin-left: auto;
  display: flex;
  align-items: center;
  gap: 8px;
  padding-left: 5px;
  border: 1px solid;
  border-color: #808080 #fff #fff #808080;
`;

const StClock = styled.div`
  margin-left: 8px;
  margin-right: 2px;
`;
